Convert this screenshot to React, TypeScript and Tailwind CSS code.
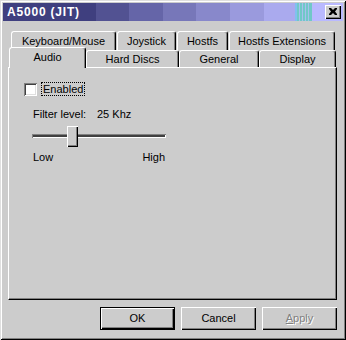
import React from "react";

const raised =
  "shadow-[inset_1px_1px_0_#fff,inset_-1px_-1px_0_#000,inset_-2px_-2px_0_#808080]";

function TitleBar() {
  return (
    <div className="h-[18px] w-[340px] flex items-center justify-between pl-[4px] pr-[2px] bg-[linear-gradient(to_right,#3f3f7f_0,#3f3f7f_93px,#525292_93px,#525292_126px,#6565a8_126px,#6565a8_160px,#7777b9_160px,#7777b9_193px,#8888cb_193px,#8888cb_227px,#9a9add_227px,#9a9add_261px,#aaaaee_261px,#aaaaee_292px,#80c0f0_292px,#80c0f0_294px,#70c8c8_294px,#70c8c8_296px,#a8c0ee_296px,#a8c0ee_297px,#70c8c8_297px,#70c8c8_299px,#a8c0ee_299px,#a8c0ee_300px,#70c8c8_300px,#70c8c8_302px,#a8c0ee_302px,#a8c0ee_303px,#70c8c8_303px,#70c8c8_305px,#a8c0ee_305px,#a8c0ee_306px,#70c8c8_306px,#70c8c8_309px,#b9b9ff_309px,#b9b9ff_100%)]">
      <span className="text-white font-bold text-[12px] leading-[14px] tracking-[0.8px]">
        A5000 (JIT)
      </span>
      <div
        className={`w-[16px] h-[14px] bg-[#cccccc] flex items-center justify-center ${raised}`}
      >
        <svg width="8" height="7" viewBox="0 0 8 7" className="-mt-px">
          <path d="M0 0h2l2 2 2-2h2v1l-2 2.5 2 2.5v1h-2l-2-2-2 2h-2v-1l2-2.5-2-2.5z" fill="#000" />
        </svg>
      </div>
    </div>
  );
}

function BackTab({ label, w }: { label: string; w: string }) {
  return (
    <div
      className={`${w} h-[19px] flex items-start justify-center pt-[3px] border-l border-t border-r border-l-white border-t-white border-r-black rounded-t-[3px] shadow-[inset_-1px_0_0_#808080]`}
    >
      {label}
    </div>
  );
}

function FrontTab({ label, w }: { label: string; w: string }) {
  return (
    <div
      className={`${w} h-[17px] flex items-center justify-center border-l border-t border-r border-l-white border-t-white border-r-black rounded-t-[3px] shadow-[inset_-1px_0_0_#808080]`}
    >
      {label}
    </div>
  );
}

export default function App() {
  return (
    <div className="w-[346px] h-[340px] bg-[#cccccc] flex flex-col pt-[3px] px-[3px] font-['Liberation_Sans',Arial,sans-serif] text-[11px] leading-[13px] text-black shadow-[inset_1px_1px_0_#dfdfdf,inset_-1px_-1px_0_#000,inset_2px_2px_0_#fff,inset_-2px_-2px_0_#808080]">
      <TitleBar />
      <div className="mt-[10px] ml-[5px] flex flex-col">
        <div className="flex gap-px pl-[3px]">
          <BackTab label="Keyboard/Mouse" w="w-[105px]" />
          <BackTab label="Joystick" w="w-[59px]" />
          <BackTab label="Hostfs" w="w-[51px]" />
          <BackTab label="Hostfs Extensions" w="w-[106px]" />
        </div>
        <div className="flex items-end h-[17px] pl-px">
          <div className="w-[77px] h-[21px] -mb-px relative z-10 bg-[#cccccc] flex items-center justify-center pb-[2px] border-l border-t border-r border-l-white border-t-white border-r-black rounded-t-[3px] shadow-[inset_-1px_0_0_#808080]">
            Audio
          </div>
          <FrontTab label="Hard Discs" w="w-[93px]" />
          <FrontTab label="General" w="w-[80px]" />
          <FrontTab label="Display" w="w-[77px]" />
        </div>
        <div className="w-[329px] h-[233px] border border-l-white border-t-white border-r-black border-b-black shadow-[inset_-1px_-1px_0_#808080] pt-[14px] pl-[15px] flex flex-col">
          <div className="flex items-center h-[14px]">
            <div className="w-[13px] h-[13px] bg-white shadow-[inset_1px_1px_0_#808080,inset_-1px_-1px_0_#fff,inset_2px_2px_0_#404040,inset_-2px_-2px_0_#dfdfdf]" />
            <div className="ml-[4px] h-[14px] px-px border border-dotted border-black leading-[12px]">
              Enabled
            </div>
          </div>
          <div className="mt-[12px] ml-[9px] flex">
            <span className="w-[64px]">Filter level:</span>
            <span>25 Khz</span>
          </div>
          <div className="mt-[5px] ml-[8px] relative w-[134px] h-[21px]">
            <div className="absolute left-0 top-[8px] w-[134px] h-[4px] bg-[#404040] shadow-[inset_1px_1px_0_#808080,inset_-1px_-1px_0_#fff]" />
            <div
              className={`absolute left-[35px] top-0 w-[11px] h-[21px] bg-[#cccccc] ${raised}`}
            />
          </div>
          <div className="mt-[4px] ml-[9px] w-[132px] flex justify-between">
            <span>Low</span>
            <span>High</span>
          </div>
        </div>
      </div>
      <div className="mt-[7px] ml-[97px] flex gap-[6px]">
        <div className="w-[75px] h-[23px] border border-black bg-[#cccccc] flex items-center justify-center shadow-[inset_1px_1px_0_#fff,inset_-1px_-1px_0_#000,inset_-2px_-2px_0_#808080]">
          OK
        </div>
        <div
          className={`w-[75px] h-[23px] bg-[#cccccc] flex items-center justify-center ${raised}`}
        >
          Cancel
        </div>
        <div
          className={`w-[75px] h-[23px] bg-[#cccccc] flex items-center justify-center text-[#808080] [text-shadow:1px_1px_0_#fff] ${raised}`}
        >
          <span>
            <span className="underline">A</span>pply
          </span>
        </div>
      </div>
    </div>
  );
}
